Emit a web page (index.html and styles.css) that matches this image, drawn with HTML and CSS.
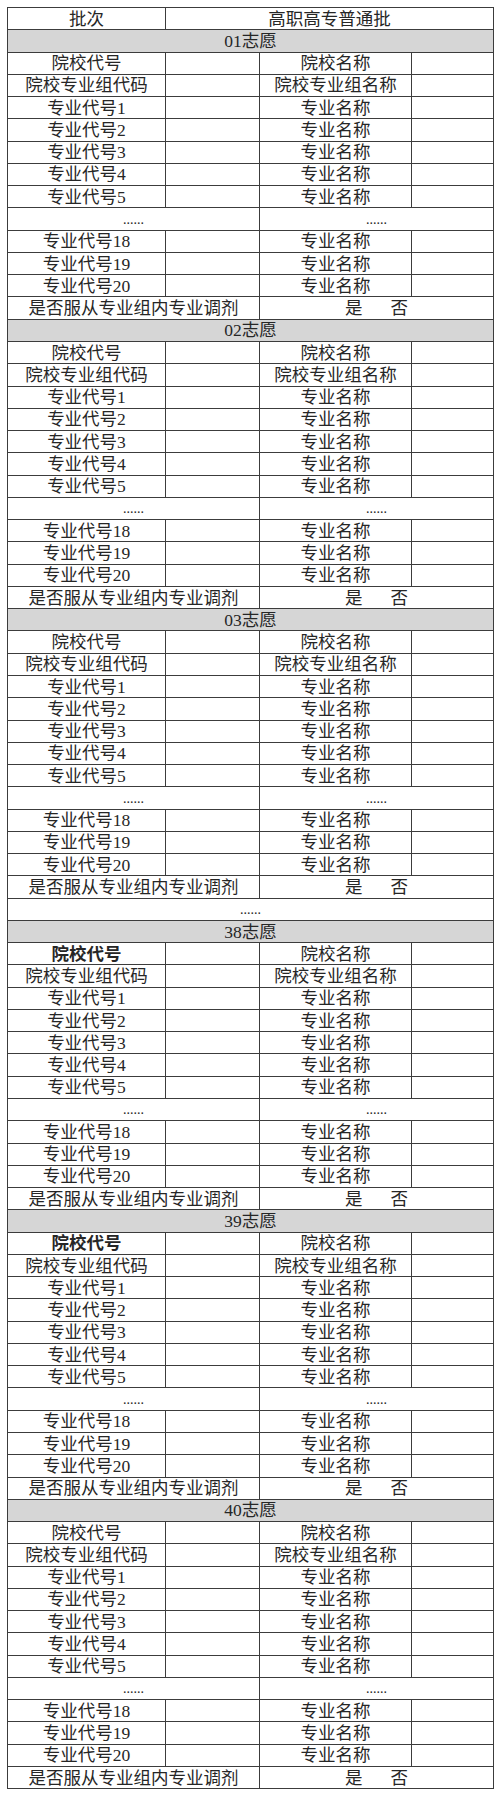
FILE: index.html
```html
<!DOCTYPE html>
<html lang="zh-CN">
<head>
<meta charset="utf-8">
<title>高职高专普通批志愿表</title>
<link rel="stylesheet" href="styles.css">
</head>
<body>
<table class="sheet">
<colgroup><col class="c1"><col class="c2"><col class="c3"><col class="c4"></colgroup>
<tbody>
<tr><td>批次</td><td colspan="3" class="batch">高职高专普通批</td></tr>

<tr class="title"><td colspan="4">01志愿</td></tr>
<tr><td>院校代号</td><td></td><td>院校名称</td><td></td></tr>
<tr><td>院校专业组代码</td><td></td><td>院校专业组名称</td><td></td></tr>
<tr><td>专业代号1</td><td></td><td>专业名称</td><td></td></tr>
<tr><td>专业代号2</td><td></td><td>专业名称</td><td></td></tr>
<tr><td>专业代号3</td><td></td><td>专业名称</td><td></td></tr>
<tr><td>专业代号4</td><td></td><td>专业名称</td><td></td></tr>
<tr><td>专业代号5</td><td></td><td>专业名称</td><td></td></tr>
<tr class="dots"><td colspan="2">......</td><td colspan="2">......</td></tr>
<tr><td>专业代号18</td><td></td><td>专业名称</td><td></td></tr>
<tr><td>专业代号19</td><td></td><td>专业名称</td><td></td></tr>
<tr><td>专业代号20</td><td></td><td>专业名称</td><td></td></tr>
<tr><td colspan="2">是否服从专业组内专业调剂</td><td colspan="2"><span>是</span><span class="no">否</span></td></tr>

<tr class="title"><td colspan="4">02志愿</td></tr>
<tr><td>院校代号</td><td></td><td>院校名称</td><td></td></tr>
<tr><td>院校专业组代码</td><td></td><td>院校专业组名称</td><td></td></tr>
<tr><td>专业代号1</td><td></td><td>专业名称</td><td></td></tr>
<tr><td>专业代号2</td><td></td><td>专业名称</td><td></td></tr>
<tr><td>专业代号3</td><td></td><td>专业名称</td><td></td></tr>
<tr><td>专业代号4</td><td></td><td>专业名称</td><td></td></tr>
<tr><td>专业代号5</td><td></td><td>专业名称</td><td></td></tr>
<tr class="dots"><td colspan="2">......</td><td colspan="2">......</td></tr>
<tr><td>专业代号18</td><td></td><td>专业名称</td><td></td></tr>
<tr><td>专业代号19</td><td></td><td>专业名称</td><td></td></tr>
<tr><td>专业代号20</td><td></td><td>专业名称</td><td></td></tr>
<tr><td colspan="2">是否服从专业组内专业调剂</td><td colspan="2"><span>是</span><span class="no">否</span></td></tr>

<tr class="title"><td colspan="4">03志愿</td></tr>
<tr><td>院校代号</td><td></td><td>院校名称</td><td></td></tr>
<tr><td>院校专业组代码</td><td></td><td>院校专业组名称</td><td></td></tr>
<tr><td>专业代号1</td><td></td><td>专业名称</td><td></td></tr>
<tr><td>专业代号2</td><td></td><td>专业名称</td><td></td></tr>
<tr><td>专业代号3</td><td></td><td>专业名称</td><td></td></tr>
<tr><td>专业代号4</td><td></td><td>专业名称</td><td></td></tr>
<tr><td>专业代号5</td><td></td><td>专业名称</td><td></td></tr>
<tr class="dots"><td colspan="2">......</td><td colspan="2">......</td></tr>
<tr><td>专业代号18</td><td></td><td>专业名称</td><td></td></tr>
<tr><td>专业代号19</td><td></td><td>专业名称</td><td></td></tr>
<tr><td>专业代号20</td><td></td><td>专业名称</td><td></td></tr>
<tr><td colspan="2">是否服从专业组内专业调剂</td><td colspan="2"><span>是</span><span class="no">否</span></td></tr>

<tr class="dots"><td colspan="4">......</td></tr>

<tr class="title"><td colspan="4">38志愿</td></tr>
<tr><td class="strong">院校代号</td><td></td><td>院校名称</td><td></td></tr>
<tr><td>院校专业组代码</td><td></td><td>院校专业组名称</td><td></td></tr>
<tr><td>专业代号1</td><td></td><td>专业名称</td><td></td></tr>
<tr><td>专业代号2</td><td></td><td>专业名称</td><td></td></tr>
<tr><td>专业代号3</td><td></td><td>专业名称</td><td></td></tr>
<tr><td>专业代号4</td><td></td><td>专业名称</td><td></td></tr>
<tr><td>专业代号5</td><td></td><td>专业名称</td><td></td></tr>
<tr class="dots"><td colspan="2">......</td><td colspan="2">......</td></tr>
<tr><td>专业代号18</td><td></td><td>专业名称</td><td></td></tr>
<tr><td>专业代号19</td><td></td><td>专业名称</td><td></td></tr>
<tr><td>专业代号20</td><td></td><td>专业名称</td><td></td></tr>
<tr><td colspan="2">是否服从专业组内专业调剂</td><td colspan="2"><span>是</span><span class="no">否</span></td></tr>

<tr class="title"><td colspan="4">39志愿</td></tr>
<tr><td class="strong">院校代号</td><td></td><td>院校名称</td><td></td></tr>
<tr><td>院校专业组代码</td><td></td><td>院校专业组名称</td><td></td></tr>
<tr><td>专业代号1</td><td></td><td>专业名称</td><td></td></tr>
<tr><td>专业代号2</td><td></td><td>专业名称</td><td></td></tr>
<tr><td>专业代号3</td><td></td><td>专业名称</td><td></td></tr>
<tr><td>专业代号4</td><td></td><td>专业名称</td><td></td></tr>
<tr><td>专业代号5</td><td></td><td>专业名称</td><td></td></tr>
<tr class="dots"><td colspan="2">......</td><td colspan="2">......</td></tr>
<tr><td>专业代号18</td><td></td><td>专业名称</td><td></td></tr>
<tr><td>专业代号19</td><td></td><td>专业名称</td><td></td></tr>
<tr><td>专业代号20</td><td></td><td>专业名称</td><td></td></tr>
<tr><td colspan="2">是否服从专业组内专业调剂</td><td colspan="2"><span>是</span><span class="no">否</span></td></tr>

<tr class="title"><td colspan="4">40志愿</td></tr>
<tr><td>院校代号</td><td></td><td>院校名称</td><td></td></tr>
<tr><td>院校专业组代码</td><td></td><td>院校专业组名称</td><td></td></tr>
<tr><td>专业代号1</td><td></td><td>专业名称</td><td></td></tr>
<tr><td>专业代号2</td><td></td><td>专业名称</td><td></td></tr>
<tr><td>专业代号3</td><td></td><td>专业名称</td><td></td></tr>
<tr><td>专业代号4</td><td></td><td>专业名称</td><td></td></tr>
<tr><td>专业代号5</td><td></td><td>专业名称</td><td></td></tr>
<tr class="dots"><td colspan="2">......</td><td colspan="2">......</td></tr>
<tr><td>专业代号18</td><td></td><td>专业名称</td><td></td></tr>
<tr><td>专业代号19</td><td></td><td>专业名称</td><td></td></tr>
<tr><td>专业代号20</td><td></td><td>专业名称</td><td></td></tr>
<tr><td colspan="2">是否服从专业组内专业调剂</td><td colspan="2"><span>是</span><span class="no">否</span></td></tr>
</tbody>
</table>
</body>
</html>
```

FILE: styles.css
```css
html, body {
  margin: 0;
  padding: 0;
  background: #ffffff;
}

body {
  padding: 7px 0 0 7px;
  font-family: "Liberation Serif", "Noto Sans CJK SC", serif;
  color: #262626;
}

.sheet {
  border-collapse: collapse;
  table-layout: fixed;
  width: 486px;
  border: 1.5px solid #3c3c3c;
}

.c1 { width: 158px; }
.c2 { width: 94px; }
.c3 { width: 152px; }
.c4 { width: 82px; }

.sheet tr {
  height: 22.28px;
}

.sheet td {
  border: 1px solid #3c3c3c;
  padding: 0;
  text-align: center;
  vertical-align: middle;
  font-size: 17.5px;
  line-height: 20px;
  white-space: nowrap;
  overflow: hidden;
}

.title td {
  background: #d6d6d6;
}

.dots td {
  font-size: 14px;
  line-height: 14px;
  vertical-align: bottom;
  padding-bottom: 3px;
}

.strong {
  font-weight: 700;
}

.no {
  margin-left: 28px;
}
```
